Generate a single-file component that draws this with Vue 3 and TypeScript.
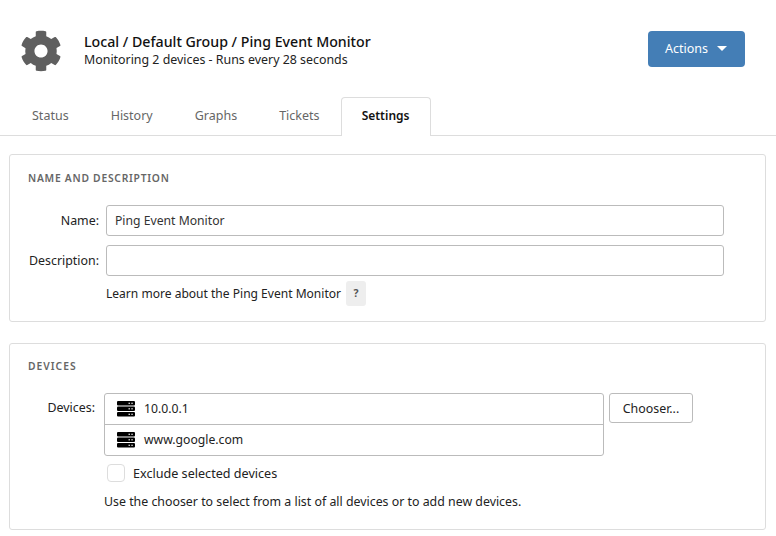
<script setup lang="ts">
const tabs: string[] = ['Status', 'History', 'Graphs', 'Tickets']
const devices: string[] = ['10.0.0.1', 'www.google.com']
const gear = 'M487.4 315.7l-42.6-24.6c4.3-23.2 4.3-47 0-70.2l42.6-24.6c4.9-2.8 7.1-8.6 5.5-14-11.1-35.6-30-67.8-54.7-94.6-3.8-4.1-10-5.1-14.8-2.3L380.8 110c-17.9-15.4-38.5-27.3-60.8-35.1V25.8c0-5.6-3.9-10.5-9.4-11.7-36.7-8.2-74.3-7.8-109.2 0-5.5 1.2-9.4 6.1-9.4 11.7V75c-22.2 7.9-42.8 19.8-60.8 35.1L88.7 85.5c-4.9-2.8-11-1.9-14.8 2.3-24.7 26.7-43.6 58.9-54.7 94.6-1.7 5.4.6 11.2 5.5 14L67.3 221c-4.3 23.2-4.3 47 0 70.2l-42.6 24.6c-4.9 2.8-7.1 8.6-5.5 14 11.1 35.6 30 67.8 54.7 94.6 3.8 4.1 10 5.1 14.8 2.3l42.6-24.6c17.9 15.4 38.5 27.3 60.8 35.1v49.2c0 5.6 3.9 10.5 9.4 11.7 36.7 8.2 74.3 7.8 109.2 0 5.5-1.2 9.4-6.1 9.4-11.7v-49.2c22.2-7.9 42.8-19.8 60.8-35.1l42.6 24.6c4.9 2.8 11 1.9 14.8-2.3 24.7-26.7 43.6-58.9 54.7-94.6 1.5-5.5-.7-11.3-5.6-14.1zM256 336c-44.1 0-80-35.9-80-80s35.9-80 80-80 80 35.9 80 80-35.9 80-80 80z'
</script>

<template>
  <div class="page">
    <header class="head">
      <svg class="gear" viewBox="0 0 512 512"><path :d="gear" fill="#5f5f5f" /></svg>
      <div class="titles">
        <div class="title">Local / Default Group / Ping Event Monitor</div>
        <div class="sub">Monitoring 2 devices - Runs every 28 seconds</div>
      </div>
      <button class="actions">Actions<span class="caret"></span></button>
    </header>
    <nav class="tabs">
      <span v-for="t in tabs" :key="t" class="tab">{{ t }}</span>
      <span class="tab active">Settings</span>
    </nav>
    <section class="panel first">
      <h2>NAME AND DESCRIPTION</h2>
      <div class="row">
        <label class="lab">Name:</label>
        <div class="input">Ping Event Monitor</div>
      </div>
      <div class="row second">
        <label class="lab">Description:</label>
        <div class="input"></div>
      </div>
      <div class="learn">Learn more about the Ping Event Monitor<span class="q">?</span></div>
    </section>
    <section class="panel devs">
      <h2>DEVICES</h2>
      <div class="devrow">
        <label class="lab small">Devices:</label>
        <div class="list">
          <div v-for="d in devices" :key="d" class="item">
            <svg class="server" viewBox="0 0 18 16">
              <g v-for="y in [0, 5.5, 11]" :key="y">
                <rect x="0" :y="y" width="18" height="4.6" rx="1.1" fill="#000" />
                <rect x="11.5" :y="y + 1.7" width="1.5" height="1.2" fill="#ddd" />
                <rect x="14.3" :y="y + 1.7" width="1.5" height="1.2" fill="#ddd" />
              </g>
            </svg>
            <span class="devname">{{ d }}</span>
          </div>
        </div>
        <button class="chooser">Chooser...</button>
      </div>
      <div class="check"><span class="box"></span>Exclude selected devices</div>
      <div class="help">Use the chooser to select from a list of all devices or to add new devices.</div>
    </section>
  </div>
</template>

<style>
html, body { margin: 0; background: #fff; }
</style>

<style scoped>
.page {
  width: 776px;
  height: 536px;
  overflow: hidden;
  font-family: "Noto Sans", "Liberation Sans", sans-serif;
  font-size: 12.4px;
  color: #222;
}
.head {
  height: 97px;
  display: flex;
  align-items: center;
  padding: 4px 31px 0 20px;
  box-sizing: border-box;
}
.gear { width: 42px; height: 42px; flex: none; }
.titles { margin-left: 22px; flex: 1; margin-top: -1px; }
.title { font-size: 14.2px; font-weight: 500; line-height: 19px; color: #111; }
.sub { font-size: 12.4px; line-height: 17px; color: #222; }
.actions {
  width: 97px;
  height: 36px;
  background: #447eb6;
  border: 0;
  border-radius: 4px;
  color: #fff;
  font: inherit;
  font-size: 12.5px;
  display: flex;
  align-items: center;
  justify-content: center;
  margin-top: -4px;
  padding: 0 1px 0 0;
}
.caret {
  margin-left: 9px;
  border-left: 5px solid transparent;
  border-right: 5px solid transparent;
  border-top: 5px solid #fff;
}
.tabs {
  display: flex;
  height: 39px;
  border-bottom: 1px solid #ddd;
  box-sizing: border-box;
  padding-left: 11px;
}
.tab {
  padding: 0 21px;
  line-height: 37px;
  color: #666;
  font-size: 12.5px;
}
.tab.active {
  flex: none;
  height: 39px;
  box-sizing: border-box;
  width: 90px;
  padding: 0;
  text-align: center;
  line-height: 35px;
  background: #fff;
  border: 1px solid #ddd;
  border-bottom: 0;
  border-radius: 4px 4px 0 0;
  color: #111;
  font-size: 12px;
  font-weight: 600;
}
.panel {
  margin: 18px 10px 0 9px;
  border: 1px solid #ddd;
  border-radius: 3px;
  box-sizing: border-box;
  padding: 0 18px;
}
.first { height: 168px; }
.devs { margin-top: 21px; height: 187px; }
h2 {
  margin: 16px 0 0;
  font-size: 10.3px;
  line-height: 14px;
  font-weight: 600;
  letter-spacing: 0.75px;
  color: #666;
}
.devs h2 { margin-top: 15px; letter-spacing: 1px; }
.row { display: flex; align-items: center; margin-top: 20px; }
.row.second { margin-top: 9px; }
.lab { width: 71px; text-align: right; flex: none; margin-right: 7px; font-size: 12.4px; }
.lab.small { width: 67px; margin-right: 9px; line-height: 30px; align-self: flex-start; }
.input {
  width: 618px;
  height: 31px;
  box-sizing: border-box;
  border: 1px solid #bbb;
  border-radius: 3px;
  padding: 0 8px;
  line-height: 29px;
  font-size: 12.2px;
  color: #333;
}
.learn { margin: 5px 0 0 78px; display: flex; align-items: center; height: 25px; font-size: 12.05px; }
.q {
  width: 20px;
  height: 25px;
  margin-left: 5px;
  background: #eee;
  border-radius: 3px;
  text-align: center;
  line-height: 25px;
  font-weight: 700;
  font-size: 10.5px;
  color: #555;
}
.devrow { display: flex; align-items: flex-start; margin-top: 20px; }
.list {
  width: 500px;
  height: 63px;
  box-sizing: border-box;
  border: 1px solid #bbb;
  border-radius: 3px;
}
.item {
  height: 30px;
  box-sizing: border-box;
  display: flex;
  align-items: center;
  padding-left: 12px;
  font-size: 12.2px;
  color: #222;
}
.item + .item { border-top: 1px solid #bbb; height: 31px; }
.devname { padding-bottom: 2px; }
.server { width: 18px; height: 16px; margin-right: 9px; flex: none; }
.chooser {
  width: 84px;
  height: 30px;
  margin-left: 5px;
  background: #fff;
  border: 1px solid #bbb;
  border-radius: 3px;
  font: inherit;
  font-size: 12.4px;
  color: #222;
  padding: 0;
}
.check { display: flex; align-items: center; margin: 8px 0 0 76px; font-size: 12.6px; height: 18px; }
.box {
  width: 18px;
  height: 18px;
  box-sizing: border-box;
  border: 1px solid #ddd;
  border-radius: 4px;
  margin: 0 8px 0 3px;
}
.help { margin: 11px 0 0 76px; font-size: 12.37px; line-height: 17px; }
</style>
